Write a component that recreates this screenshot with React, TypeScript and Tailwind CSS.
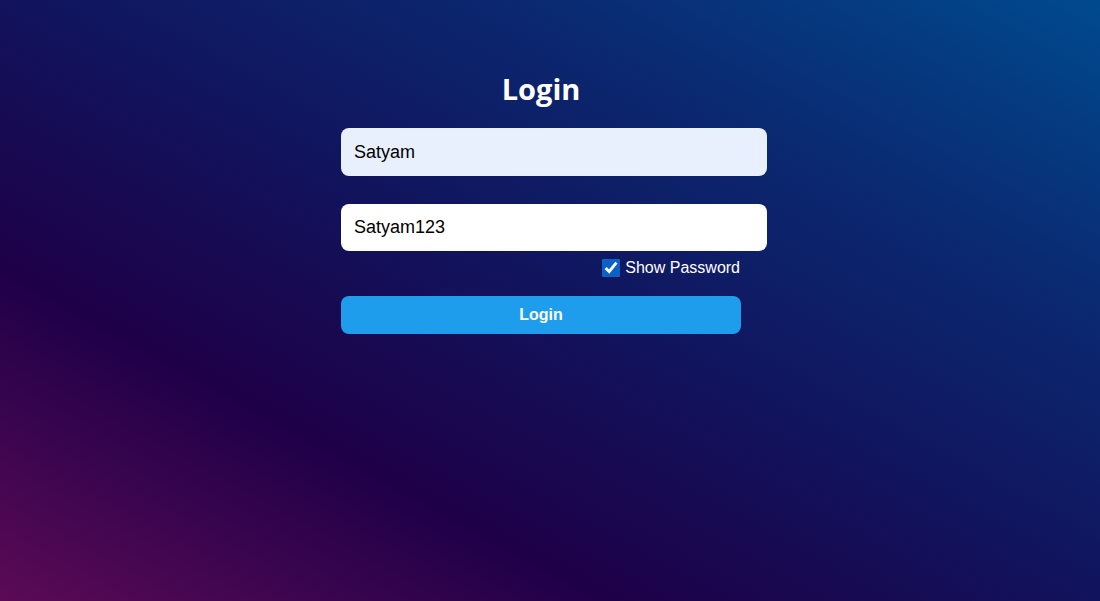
import React, { useState } from 'react';

const App: React.FC = () => {
  const [username, setUsername] = useState('Satyam');
  const [password, setPassword] = useState('Satyam123');
  const [showPassword, setShowPassword] = useState(true);

  return (
    <div className="h-[601px] w-full overflow-hidden bg-[linear-gradient(to_top_right,#5c0a56_0%,#1e0048_28%,#11135c_50%,#0a2a72_75%,#004a8e_100%)] font-['Liberation_Sans',Arial,sans-serif]">
      <div className="flex justify-center">
        <div className="w-[400px] mr-[18px] pt-[71px]">
          <h1 className="text-center text-[29px] leading-[36px] font-bold text-white font-['Open_Sans',sans-serif]">
            Login
          </h1>

          <form className="mt-[21px]" onSubmit={(e) => e.preventDefault()}>
            <input
              type="text"
              value={username}
              onChange={(e) => setUsername(e.target.value)}
              className="block w-[426px] h-[48px] px-[13px] rounded-lg bg-[#e8f0fe] text-black text-[18px] outline-none"
            />
            <input
              type={showPassword ? 'text' : 'password'}
              value={password}
              onChange={(e) => setPassword(e.target.value)}
              className="block mt-[28px] w-[426px] h-[47px] px-[13px] rounded-lg bg-white text-black text-[18px] outline-none"
            />

            {/* show password toggle */}
            <label className="mt-[8px] flex items-center justify-end gap-[5px] h-[18px] text-white text-[16px] pr-[1px]">
              <input
                type="checkbox"
                checked={showPassword}
                onChange={(e) => setShowPassword(e.target.checked)}
                className="w-[18px] h-[18px] m-0 accent-[#0b62c4]"
              />
              Show Password
            </label>

            <button
              type="submit"
              className="mt-[19px] block w-full h-[38px] rounded-lg bg-[#1e9dec] text-white font-bold text-[16px]"
            >
              Login
            </button>
          </form>
        </div>
      </div>
    </div>
  );
};

export default App;
